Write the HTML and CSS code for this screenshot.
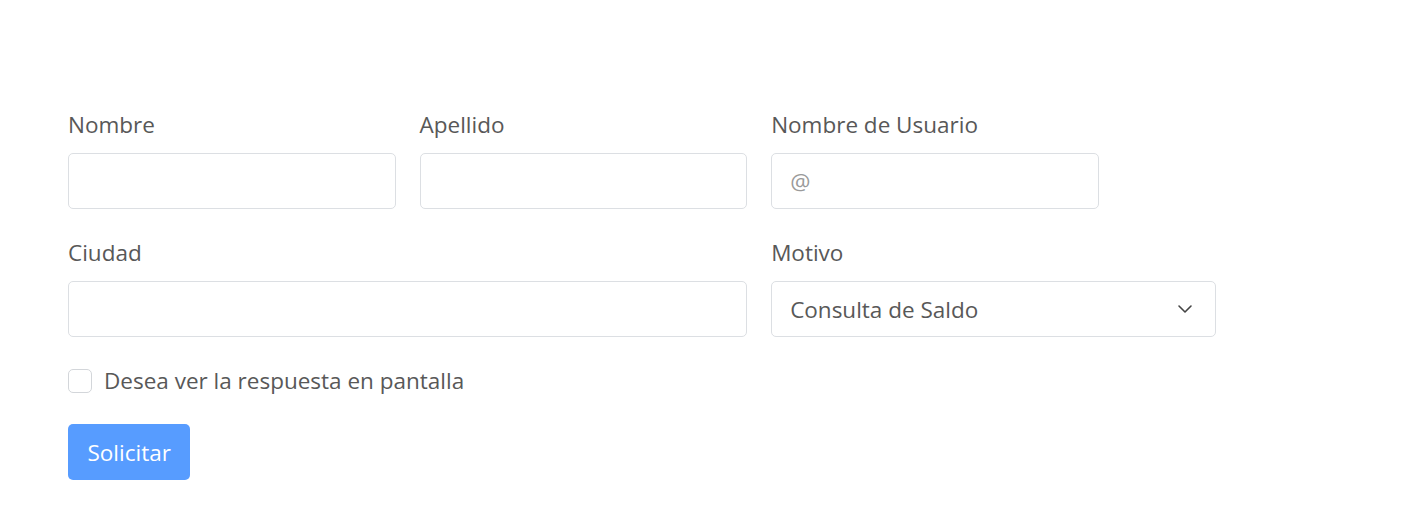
FILE: index.html
```html
<!DOCTYPE html>
<html lang="es">
<head>
<meta charset="utf-8">
<title>Formulario</title>
<link rel="stylesheet" href="styles.css">
</head>
<body>
<form class="form">
  <div class="grid">
    <div class="field span3">
      <label class="label" for="nombre">Nombre</label>
      <input class="control" id="nombre" type="text">
    </div>
    <div class="field span3">
      <label class="label" for="apellido">Apellido</label>
      <input class="control" id="apellido" type="text">
    </div>
    <div class="field span3 end">
      <label class="label" for="usuario">Nombre de Usuario</label>
      <input class="control" id="usuario" type="text" placeholder="@">
    </div>
    <div class="field span6">
      <label class="label" for="ciudad">Ciudad</label>
      <input class="control" id="ciudad" type="text">
    </div>
    <div class="field span4">
      <label class="label" for="motivo">Motivo</label>
      <div class="select-wrap">
        <select class="control select" id="motivo">
          <option>Consulta de Saldo</option>
        </select>
        <svg class="chevron" width="16" height="16" viewBox="0 0 16 16" aria-hidden="true"><path d="M2 5l6 6 6-6" fill="none" stroke="#444" stroke-width="1.6" stroke-linecap="round" stroke-linejoin="round"/></svg>
      </div>
    </div>
  </div>
  <div class="check">
    <input class="check-box" id="ver" type="checkbox">
    <label class="check-label" for="ver">Desea ver la respuesta en pantalla</label>
  </div>
  <button class="btn" type="button">Solicitar</button>
</form>
</body>
</html>
```

FILE: styles.css
```css
html, body {
  margin: 0;
  padding: 0;
  background: #fff;
  overflow: hidden;
}
body {
  font-family: "Open Sans", "Noto Sans", sans-serif;
  font-size: 22.5px;
  color: #555;
}
.form {
  padding: 108px 0 0 68px;
}
.grid {
  display: grid;
  grid-template-columns: repeat(12, 93.2px);
  column-gap: 24px;
  row-gap: 27px;
}
.field {
  display: flex;
  flex-direction: column;
}
.span3 { grid-column: span 3; }
.span6 { grid-column: span 6; }
.span4 { grid-column: span 4; }
.end { grid-column: 7 / span 3; }
.label {
  line-height: 33px;
  margin-bottom: 12px;
  color: #585858;
}
.control {
  box-sizing: border-box;
  height: 56px;
  width: 100%;
  border: 1px solid #dcdfe3;
  border-radius: 5px;
  padding: 0 18px;
  font: inherit;
  color: #585858;
  background: #fff;
  outline: none;
}
.control::placeholder {
  color: #9a9a9a;
}
.select-wrap {
  position: relative;
}
.select {
  appearance: none;
  -webkit-appearance: none;
  padding-right: 48px;
}
.chevron {
  position: absolute;
  right: 23px;
  top: 20px;
  pointer-events: none;
}
.check {
  display: flex;
  align-items: center;
  gap: 12px;
  margin-top: 27px;
  height: 33px;
}
.check-box {
  appearance: none;
  -webkit-appearance: none;
  margin: 0;
  width: 24px;
  height: 24px;
  box-sizing: border-box;
  border: 1px solid #d3d6da;
  border-radius: 5px;
  background: #fff;
}
.check-label {
  line-height: 33px;
  color: #585858;
}
.btn {
  margin-top: 27px;
  height: 56px;
  padding: 0 19.5px;
  border: none;
  border-radius: 5px;
  background: #579cff;
  color: #fff;
  font: inherit;
}
```
